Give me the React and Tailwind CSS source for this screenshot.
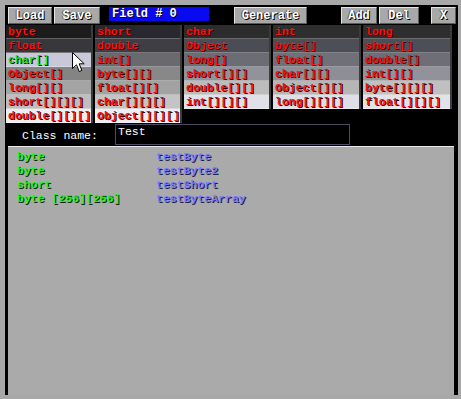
import React from 'react';

const mono = { fontFamily: '"Liberation Mono", "DejaVu Sans Mono", monospace' };

const columns = [
  {
    w: 'w-[87px]',
    rows: [
      ['byte', '#1c1c1c'],
      ['float', '#38383c'],
      ['char[]', '#c8c8d8', true],
      ['Object[]', '#848484'],
      ['long[][]', '#a4a4a4'],
      ['short[][][]', '#bebebe'],
      ['double[][][]', '#eeeef2'],
    ],
  },
  {
    w: 'w-[87px]',
    rows: [
      ['short', '#28282e'],
      ['double', '#3e3e44'],
      ['int[]', '#6a6a6e'],
      ['byte[][]', '#888888'],
      ['float[][]', '#a2a2a2'],
      ['char[][][]', '#c4c4c4'],
      ['Object[][][]', '#eeeef2'],
    ],
  },
  {
    w: 'w-[87px]',
    rows: [
      ['char', '#2c2c2c'],
      ['Object', '#4c4c54'],
      ['long[]', '#6c6c74'],
      ['short[][]', '#92929a'],
      ['double[][]', '#bcbcbc'],
      ['int[][][]', '#e0e0e8'],
    ],
  },
  {
    w: 'w-[88px]',
    rows: [
      ['int', '#2e2e2e'],
      ['byte[]', '#4e4e56'],
      ['float[]', '#707078'],
      ['char[][]', '#8e8e96'],
      ['Object[][]', '#b6b6b6'],
      ['long[][][]', '#dedee6'],
    ],
  },
  {
    w: 'w-[89px]',
    rows: [
      ['long', '#2e2e2e'],
      ['short[]', '#4e4e56'],
      ['double[]', '#6e6e76'],
      ['int[][]', '#92929a'],
      ['byte[][][]', '#c0c0c0'],
      ['float[][][]', '#e2e2ea'],
    ],
  },
];

const fields = [
  ['byte', 'testByte'],
  ['byte', 'testByte2'],
  ['short', 'testShort'],
  ['byte [256][256]', 'testByteArray'],
];

function Btn({ label, className }) {
  return (
    <div className={`h-[19px] border border-black bg-[#a8a8a8] ${className}`}>
      <div className="h-full flex items-center justify-center border-t border-l border-[#e4e4e4] border-r border-b border-r-[#5c5c5c] border-b-[#5c5c5c]">
        <span
          className="text-white font-bold text-[12px] leading-none [text-shadow:1px_1px_0_#000,-1px_0_0_#555]"
          style={mono}
        >
          {label}
        </span>
      </div>
    </div>
  );
}

function Cursor() {
  return (
    <svg className="absolute left-[72px] top-[52px]" width="13" height="21" viewBox="0 0 13 21">
      <path
        d="M0.5 0.5 L0.5 16.5 L4.5 12.8 L7.2 19.5 L9.8 18.4 L7.2 11.8 L12.2 11.8 Z"
        fill="#fff"
        stroke="#000"
        strokeWidth="1"
        strokeLinejoin="miter"
      />
    </svg>
  );
}

export default function App() {
  return (
    <div className="relative w-[461px] h-[399px] bg-[#a8a8a8] pl-[5px] pr-[3px] pt-[5px] pb-[4px] overflow-hidden">
      <div className="h-full bg-black flex flex-col">
        {/* Toolbar */}
        <div className="flex items-start pt-[1px] h-[20px] shrink-0">
          <Btn label="Load" className="ml-[2px] w-[46px]" />
          <Btn label="Save" className="w-[48px]" />
          <div className="ml-[8px] mt-[1px] w-[100px] h-[14px] bg-[#0a0af0] flex items-center pl-[3px]">
            <span
              className="text-white font-bold text-[12px] leading-none [text-shadow:1px_1px_0_#000]"
              style={mono}
            >
              Field # 0
            </span>
          </div>
          <Btn label="Generate" className="ml-[24px] w-[75px]" />
          <Btn label="Add" className="ml-[32px] w-[38px]" />
          <Btn label="Del" className="w-[42px]" />
          <Btn label="X" className="ml-[10px] w-[27px]" />
        </div>

        {/* Type palette */}
        <div className="flex items-start gap-[2px] pl-[1px] h-[98px] shrink-0">
          {columns.map((col, ci) => (
            <div key={ci} className={`${col.w} flex flex-col border-r-2 border-[#3c3c3c]`}>
              {col.rows.map(([t, bg, hover]) => (
                <div
                  key={t}
                  className="h-[14px] pl-[2px] flex items-center border-b border-white/30"
                  style={{ backgroundColor: bg }}
                >
                  <span
                    className={`font-bold text-[11.5px] leading-none whitespace-nowrap [text-shadow:1px_1px_0_#200] ${hover ? 'text-[#18e018]' : 'text-[#ff1010]'}`}
                    style={mono}
                  >
                    {t}
                  </span>
                </div>
              ))}
            </div>
          ))}
        </div>

        {/* Class name */}
        <div className="flex items-start h-[23px] shrink-0 pt-[1px]">
          <div className="ml-[17px] mt-[5px] w-[93px] text-white text-[11.5px] leading-[14px]" style={mono}>
            Class name:
          </div>
          <div
            className="w-[235px] h-[21px] border border-[#4c4c66] bg-black pl-[2px] pt-[1px] text-white text-[11.5px] leading-[12px]"
            style={mono}
          >
            Test
          </div>
        </div>

        {/* Field list */}
        <div className="flex-1 ml-[3px] mr-[4px] bg-[#aaaaaa] border-t border-[#e8e8e8] pt-[3px] pl-[9px]">
          {fields.map(([type, name], i) => (
            <div key={i} className="flex h-[14px] items-center">
              <span
                className="w-[139px] font-bold text-[11.5px] leading-none text-[#22ee22] [text-shadow:1px_1px_0_#0a2a0a]"
                style={mono}
              >
                {type}
              </span>
              <span
                className="font-bold text-[11.5px] leading-none text-[#7c7cf4] [text-shadow:1px_1px_0_#202050]"
                style={mono}
              >
                {name}
              </span>
            </div>
          ))}
        </div>
      </div>
      <Cursor />
    </div>
  );
}
